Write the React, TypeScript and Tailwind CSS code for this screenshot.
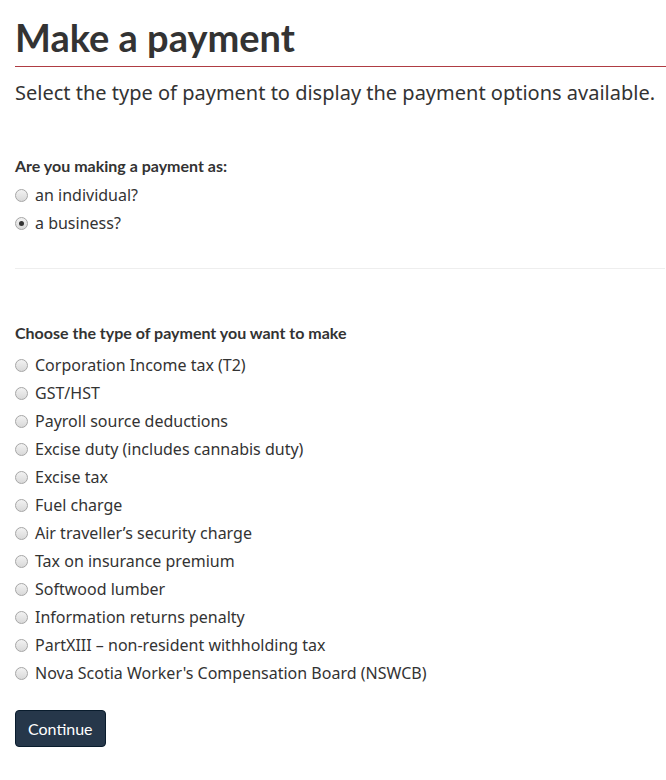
import React from "react";

const Radio = ({ checked }: { checked?: boolean }) => (
  <span className="relative inline-flex h-[13px] w-[13px] shrink-0 items-center justify-center rounded-full border border-[#a6a6a6] bg-gradient-to-b from-[#f2f2f2] to-[#d9d9d9]">
    {checked && <span className="h-[5px] w-[5px] rounded-full bg-[#333]" />}
  </span>
);

const Option = ({ label, checked }: { label: string; checked?: boolean }) => (
  <div className="flex h-[28px] items-center gap-[7px]">
    <Radio checked={checked} />
    <span className="text-[16px] text-[#333]">{label}</span>
  </div>
);

const types = [
  "Corporation Income tax (T2)",
  "GST/HST",
  "Payroll source deductions",
  "Excise duty (includes cannabis duty)",
  "Excise tax",
  "Fuel charge",
  "Air traveller’s security charge",
  "Tax on insurance premium",
  "Softwood lumber",
  "Information returns penalty",
  "PartXIII – non-resident withholding tax",
  "Nova Scotia Worker's Compensation Board (NSWCB)",
];

export default function App() {
  return (
    <div className="min-h-[780px] bg-white pl-[15px] font-['Noto_Sans',sans-serif] text-[#333]">
      <h1 className="border-b border-[#af3c43] pt-[14px] pb-[6px] font-['Lato',sans-serif] text-[38px] font-bold leading-[46px] text-[#333]">
        Make a payment
      </h1>
      <p className="mt-[10px] text-[20px] leading-[32px]">
        Select the type of payment to display the payment options available.
      </p>
      <div className="mt-[46px] mr-[1px] border-b border-[#eee] pb-[31px]">
        <div className="font-['Lato',sans-serif] text-[16px] font-bold leading-[22px]">
          Are you making a payment as:
        </div>
        <div className="mt-[4px]">
          <Option label="an individual?" />
          <Option label="a business?" checked />
        </div>
      </div>
      <div className="mt-[53px]">
        <div className="font-['Lato',sans-serif] text-[16px] font-bold leading-[22px]">
          Choose the type of payment you want to make
        </div>
        <div className="mt-[7px]">
          {types.map((t) => (
            <Option key={t} label={t} />
          ))}
        </div>
      </div>
      <button className="mt-[23px] h-[37px] rounded-[4px] border border-[#091c2d] bg-[#26374a] px-[12px] font-['Lato',sans-serif] text-[16px] text-white">
        Continue
      </button>
    </div>
  );
}
